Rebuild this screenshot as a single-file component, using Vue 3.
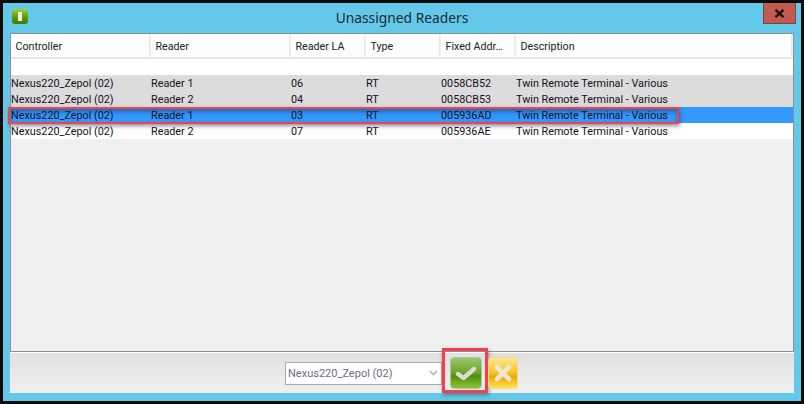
<script setup>
const cols = ['Controller', 'Reader', 'Reader LA', 'Type', 'Fixed Addr…', 'Description']
const rows = [
  { id: 1, cls: 'gray', c: ['Nexus220_Zepol (02)', 'Reader 1', '06', 'RT', '0058CB52', 'Twin Remote Terminal - Various'] },
  { id: 2, cls: 'gray', c: ['Nexus220_Zepol (02)', 'Reader 2', '04', 'RT', '0058CB53', 'Twin Remote Terminal - Various'] },
  { id: 3, cls: 'sel', c: ['Nexus220_Zepol (02)', 'Reader 1', '03', 'RT', '005936AD', 'Twin Remote Terminal - Various'] },
  { id: 4, cls: 'white', c: ['Nexus220_Zepol (02)', 'Reader 2', '07', 'RT', '005936AE', 'Twin Remote Terminal - Various'] }
]
</script>

<template>
  <div class="win">
    <div class="titlebar">
      <span class="appicon"><i></i></span>
      <span class="title">Unassigned Readers</span>
      <span class="close">
        <svg width="11" height="9" viewBox="0 0 11 9"><path d="M1.5 .8 L9.5 8.2 M9.5 .8 L1.5 8.2" stroke="#1a1010" stroke-width="2.3" fill="none"/></svg>
      </span>
    </div>
    <div class="panel">
      <div class="grid">
        <div class="head">
          <div v-for="h in cols" :key="h" class="hcell">{{ h }}</div>
        </div>
        <div class="gap"></div>
        <div class="rows">
          <div v-for="r in rows" :key="r.id" class="row" :class="r.cls">
            <div v-for="(t, i) in r.c" :key="i" class="cell">{{ t }}</div>
          </div>
          <div class="mark-row"></div>
        </div>
      </div>
      <div class="foot">
        <div class="select">
          <span>Nexus220_Zepol (02)</span>
          <svg width="9" height="6" viewBox="0 0 9 6"><path d="M1 1 L4.5 4.5 L8 1" stroke="#b4b4b4" stroke-width="1.6" fill="none"/></svg>
        </div>
        <div class="btn ok">
          <svg width="24" height="20" viewBox="0 0 24 20"><path d="M4 11 L9.500 15 L20 6" stroke="#dcdcd6" stroke-width="4.4" stroke-linecap="round" stroke-linejoin="round" fill="none"/></svg>
          <div class="mark-ok"></div>
        </div>
        <div class="btn no">
          <svg width="22" height="20" viewBox="0 0 22 20"><path d="M5 4 L17 16 M17 4 L5 16" stroke="#efe6d0" stroke-width="4.600" stroke-linecap="round" fill="none"/></svg>
        </div>
      </div>
    </div>
  </div>
</template>

<style>
html, body { margin: 0; background: #000; }
</style>

<style scoped>
.win {
  width: 804px;
  height: 404px;
  box-sizing: border-box;
  border: 3px solid #0b0b0b;
  background: #63c8e9;
  display: flex;
  flex-direction: column;
  padding: 0 7px 8px 7px;
  font-family: Roboto, "Noto Sans", sans-serif;
  color: #111;
  overflow: hidden;
}
.titlebar {
  height: 30px;
  flex: none;
  position: relative;
  display: flex;
  justify-content: center;
  align-items: flex-start;
}
.title {
  font-family: "Noto Sans", sans-serif;
  font-size: 13.8px;
  line-height: 18px;
  margin-top: 6px;
  color: #1d2b33;
}
.appicon {
  position: absolute;
  left: 2px;
  top: 6px;
  width: 16px;
  height: 15px;
  border-radius: 3px;
  background: linear-gradient(#9fd23a, #5d9a08 55%, #3f7a04);
  display: flex;
  align-items: center;
  justify-content: center;
}
.appicon i {
  width: 4px;
  height: 9px;
  background: #eef3d8;
}
.close {
  position: absolute;
  right: -2px;
  top: 0;
  width: 33px;
  height: 21px;
  box-sizing: border-box;
  background: #c25a50;
  border: 1px solid #6d4c48;
  border-top: 0;
  display: flex;
  align-items: center;
  justify-content: center;
}
.panel {
  flex: 1;
  display: flex;
  flex-direction: column;
  min-height: 0;
}
.grid {
  height: 319px;
  box-sizing: border-box;
  flex: none;
  border: 1px solid #8f8f96;
  background: #f0f0f0;
  display: flex;
  flex-direction: column;
}
.head {
  display: grid;
  grid-template-columns: 140px 140px 75px 75px 75px 277px;
  height: 24px;
  background: #f0f0f0;
  flex: none;
}
.hcell {
  box-sizing: border-box;
  margin-right: 1px;
  background: #fcfcfc;
  border: solid #e8e8e8;
  border-width: 0 1px 1px 0;
  font-size: 10.7px;
  line-height: 26px;
  padding-left: 4.5px;
  color: #222;
  white-space: nowrap;
  overflow: hidden;
}
.gap {
  height: 17px;
  flex: none;
  background: #fff;
  border-top: 1px solid #e4e4e4;
  box-sizing: border-box;
}
.rows {
  position: relative;
}
.row {
  display: grid;
  grid-template-columns: 140px 140px 75px 75px 75px 277px;
  height: 16px;
}
.gray { background: #dcdcdc; }
.sel { background: #3399ff; }
.white { background: #fff; }
.cell {
  font-size: 10.8px;
  line-height: 18px;
  height: 16px;
  white-space: nowrap;
  color: #15101c;
}
.mark-row {
  position: absolute;
  left: -3px;
  top: 32px;
  width: 671px;
  height: 17px;
  box-sizing: border-box;
  border: 2px solid #f0414f;
  box-shadow: 1px 2px 4px rgba(50, 50, 70, .55), inset 0 3px 4px rgba(20, 40, 90, .45);
}
.foot {
  flex: 1;
  border-top: 1px solid #fff;
  background: linear-gradient(#e0e0e0, #f0f0f0);
  display: flex;
  align-items: center;
  padding-left: 275px;
}
.select {
  width: 157px;
  height: 23px;
  box-sizing: border-box;
  border: 1px solid #ababab;
  background: #fff;
  font-size: 11px;
  color: #6d6d80;
  display: flex;
  align-items: center;
  justify-content: space-between;
  padding: 0 3px 0 2px;
  margin-right: 8px;
}
.btn {
  height: 32px;
  box-sizing: border-box;
  border-radius: 4px;
  display: flex;
  align-items: center;
  justify-content: center;
  position: relative;
}
.mark-ok {
  position: absolute;
  left: -9px;
  top: -10px;
  width: 46px;
  height: 45px;
  box-sizing: border-box;
  border: 3px solid #f0414f;
  box-shadow: 1px 2px 4px rgba(50, 50, 70, .5);
}
.ok {
  width: 32px;
  background: linear-gradient(#9bc46d, #6fa52c 48%, #4f8e06 60%, #8fc43a);
  border: 1px solid #aac79a;
  margin-right: 6px;
}
.no {
  width: 30px;
  background: linear-gradient(#fbe68c, #f6c52a 48%, #eba800 62%, #ffe45a);
  border: 1px solid #f5dc8c;
}
</style>
